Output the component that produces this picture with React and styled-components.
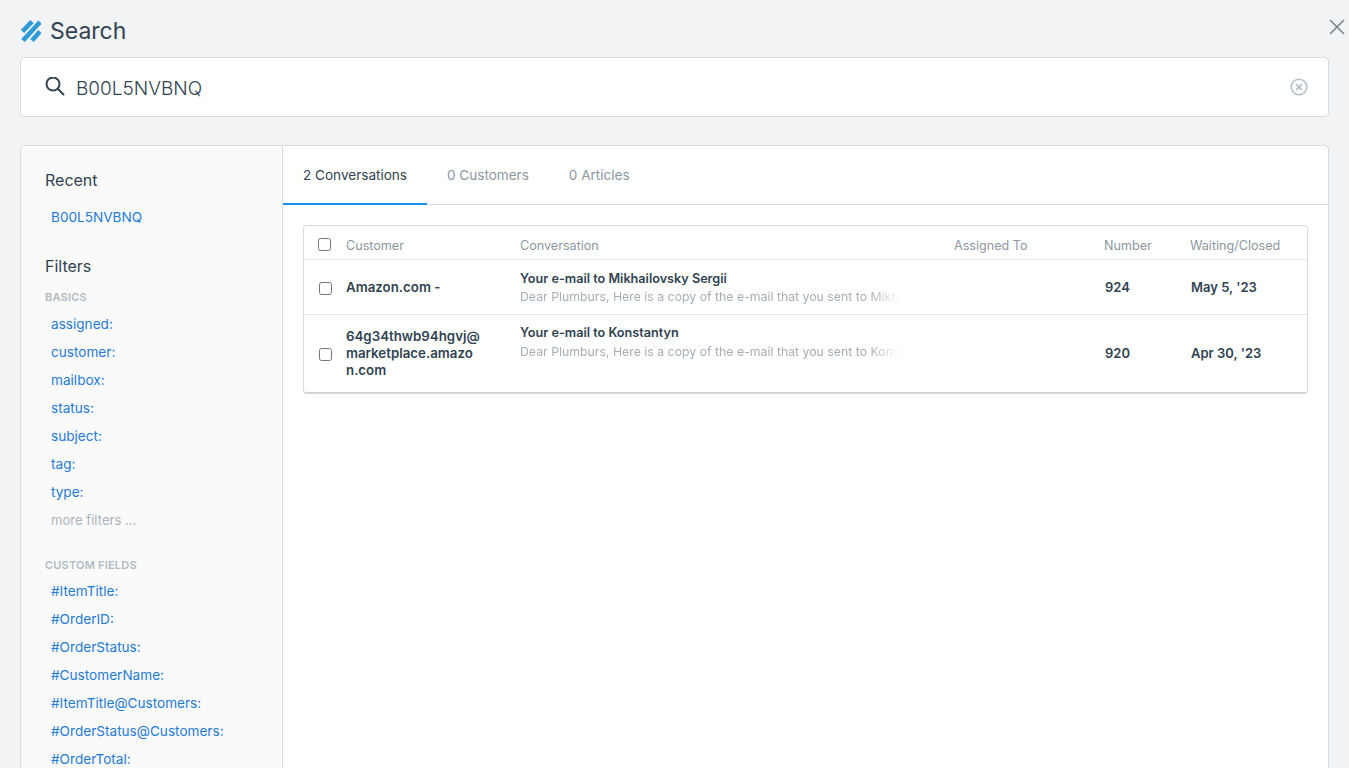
import React from "react";
import styled, { createGlobalStyle } from "styled-components";
import { X } from "lucide-react";

const Global = createGlobalStyle`
  html, body {
    margin: 0;
    height: 768px;
    overflow: hidden;
    background: #f1f3f5;
    font-family: "Inter", "Noto Sans", sans-serif;
    color: #314351;
  }
  * { box-sizing: border-box; }
`;

const Page = styled.div`
  position: relative;
  height: 768px;
  padding: 0 20px;
  overflow: hidden;
`;

const Header = styled.div`
  display: flex;
  align-items: center;
  gap: 9px;
  height: 57px;
  padding: 4px 0 0 1px;
`;

const Title = styled.h1`
  margin: 0;
  font-size: 23px;
  font-weight: 400;
  line-height: 30px;
  color: #314351;
`;

const CloseBtn = styled.div`
  position: absolute;
  top: 14px;
  right: -1px;
  width: 26px;
  height: 26px;
  color: #77858f;
`;

const SearchBox = styled.div`
  display: flex;
  align-items: center;
  height: 60px;
  padding: 0 20px 0 24px;
  background: #fff;
  border: 1px solid #d5dce1;
  border-radius: 4px;
`;

const SearchText = styled.div`
  flex: 1;
  margin: 2px 0 0 11px;
  font-size: 19px;
  font-weight: 300;
  color: #314351;
`;

const Panel = styled.div`
  display: flex;
  height: 700px;
  margin-top: 28px;
  background: #fff;
  border: 1px solid #d5dce1;
  border-radius: 4px;
`;

const Sidebar = styled.aside`
  flex: none;
  width: 262px;
  padding: 24px 24px 0;
  background: #fafafb;
  border-right: 1px solid #d5dce1;
  border-radius: 4px 0 0 0;
`;

const SideHead = styled.h3`
  margin: ${(p) => p.$top || 0}px 0 0;
  font-size: 16px;
  font-weight: 400;
  line-height: 20px;
  color: #314351;
`;

const GroupLabel = styled.div`
  margin-top: ${(p) => p.$top}px;
  font-size: 11px;
  font-weight: 600;
  line-height: 14px;
  letter-spacing: 0.2px;
  color: #b1bac2;
`;

const LinkList = styled.ul`
  list-style: none;
  margin: ${(p) => p.$top}px 0 0;
  padding: 0;
`;

const LinkItem = styled.li`
  height: 28px;
  padding-left: 6px;
  font-size: ${(p) => (p.$muted ? 13.1 : 13.6)}px;
  line-height: 28px;
  color: ${(p) => (p.$muted ? "#aab4bc" : "#1f7bd6")};
`;

const Main = styled.main`
  flex: 1;
  min-width: 0;
`;

const Tabs = styled.div`
  display: flex;
  height: 59px;
  border-bottom: 1px solid #d5dce1;
`;

const Tab = styled.div`
  height: 59px;
  padding: 0 20px;
  font-size: 13.55px;
  line-height: 58px;
  color: ${(p) => (p.$active ? "#314351" : "#8c979f")};
  border-bottom: 2px solid ${(p) => (p.$active ? "#1e90f0" : "transparent")};
`;

const Content = styled.div`
  padding: 20px 20px 0;
`;

const Table = styled.div`
  border: 1px solid #d5dce1;
  border-bottom: 2px solid #d0d7dc;
  border-radius: 4px;
`;

const Row = styled.div`
  display: grid;
  grid-template-columns: 42px 174px 434px 150px 86px 1fr;
  align-items: center;
  height: ${(p) => p.$height}px;
  padding-top: ${(p) => p.$pad || 0}px;
  border-top: ${(p) => (p.$first ? "none" : "1px solid #e4e8eb")};
`;

const HeadCell = styled.div`
  padding-top: 2px;
  font-size: 12.6px;
  color: #8c979f;
`;

const CheckCell = styled.div`
  display: flex;
  padding: ${(p) => p.$nudge || 0}px 0 0 ${(p) => p.$left}px;
`;

const Check = styled.input.attrs({ type: "checkbox" })`
  width: 13px;
  height: 13px;
  margin: 0;
`;

const Customer = styled.div`
  width: 134.5px;
  font-size: 13.3px;
  font-weight: 600;
  line-height: 17px;
  overflow-wrap: anywhere;
  color: #314351;
`;

const Conversation = styled.div`
  align-self: start;
  padding-top: ${(p) => p.$top}px;
  min-width: 0;
`;

const Subject = styled.div`
  font-size: 12.65px;
  font-weight: 600;
  line-height: 18px;
  color: #314351;
`;

const Snippet = styled.div`
  width: 380px;
  margin-top: ${(p) => p.$gap}px;
  font-size: 12.3px;
  line-height: 18px;
  white-space: nowrap;
  overflow: hidden;
  color: #a5afb7;
  mask-image: linear-gradient(to right, #000 350px, transparent 380px);
`;

const Strong = styled.div`
  padding: 0 0 ${(p) => p.$lift || 0}px 1px;
  font-size: 13px;
  font-weight: 600;
  color: #314351;
`;

const recent = ["B00L5NVBNQ"];
const basics = ["assigned:", "customer:", "mailbox:", "status:", "subject:", "tag:", "type:"];
const custom = [
  "#ItemTitle:",
  "#OrderID:",
  "#OrderStatus:",
  "#CustomerName:",
  "#ItemTitle@Customers:",
  "#OrderStatus@Customers:",
  "#OrderTotal:",
];

const rows = [
  {
    customer: "Amazon.com -",
    subject: "Your e-mail to Mikhailovsky Sergii",
    snippet: "Dear Plumburs, Here is a copy of the e-mail that you sent to Mikhailovsky Sergii",
    number: "924",
    date: "May 5, '23",
    height: 55,
    top: 10,
    gap: 0,
    lift: 0,
  },
  {
    customer: "64g34thwb94hgvj@marketplace.amazon.com",
    subject: "Your e-mail to Konstantyn",
    snippet: "Dear Plumburs, Here is a copy of the e-mail that you sent to Konstantyn",
    number: "920",
    date: "Apr 30, '23",
    height: 78,
    top: 9,
    gap: 1,
    lift: 2,
  },
];

function Logo() {
  return (
    <svg width="20" height="22" viewBox="0 0 20 22" fill="none" stroke="#2f9ad8" strokeWidth="4.6">
      <path d="M1.5 11.5 11 1.5" />
      <path d="M2 20.5 19 2" />
      <path d="M11 20.5 19 11.5" />
    </svg>
  );
}

function SearchIcon() {
  return (
    <svg width="20" height="20" viewBox="0 0 20 20" fill="none" stroke="#314351" strokeWidth="2" strokeLinecap="round">
      <circle cx="8" cy="7" r="6.5" />
      <path d="m13 12 5.5 5.5" />
    </svg>
  );
}

function ClearIcon() {
  return (
    <svg width="18" height="18" viewBox="0 0 18 18" fill="none" stroke="#b4c0ca" strokeLinecap="round">
      <circle cx="9" cy="9" r="7.8" strokeWidth="1.6" />
      <path d="m6.6 6.6 4.8 4.8m0-4.8-4.8 4.8" strokeWidth="1.8" />
    </svg>
  );
}

export default function App() {
  return (
    <Page>
      <Global />
      <Header>
        <Logo />
        <Title>Search</Title>
      </Header>
      <CloseBtn>
        <X size={26} strokeWidth={1.4} />
      </CloseBtn>
      <SearchBox>
        <SearchIcon />
        <SearchText>B00L5NVBNQ</SearchText>
        <ClearIcon />
      </SearchBox>
      <Panel>
        <Sidebar>
          <SideHead>Recent</SideHead>
          <LinkList $top={13}>
            {recent.map((r) => (
              <LinkItem key={r}>{r}</LinkItem>
            ))}
          </LinkList>
          <SideHead $top={25}>Filters</SideHead>
          <GroupLabel $top={14}>BASICS</GroupLabel>
          <LinkList $top={6}>
            {basics.map((b) => (
              <LinkItem key={b}>{b}</LinkItem>
            ))}
            <LinkItem $muted>more filters ...</LinkItem>
          </LinkList>
          <GroupLabel $top={24}>CUSTOM FIELDS</GroupLabel>
          <LinkList $top={5}>
            {custom.map((c) => (
              <LinkItem key={c}>{c}</LinkItem>
            ))}
          </LinkList>
        </Sidebar>
        <Main>
          <Tabs>
            <Tab $active>2 Conversations</Tab>
            <Tab>0 Customers</Tab>
            <Tab>0 Articles</Tab>
          </Tabs>
          <Content>
            <Table>
              <Row $first $height={33} $pad={4}>
                <CheckCell $left={14}>
                  <Check />
                </CheckCell>
                <HeadCell>Customer</HeadCell>
                <HeadCell>Conversation</HeadCell>
                <HeadCell>Assigned To</HeadCell>
                <HeadCell>Number</HeadCell>
                <HeadCell>Waiting/Closed</HeadCell>
              </Row>
              {rows.map((r) => (
                <Row key={r.number} $height={r.height}>
                  <CheckCell $left={15} $nudge={2}>
                    <Check />
                  </CheckCell>
                  <Customer>{r.customer}</Customer>
                  <Conversation $top={r.top}>
                    <Subject>{r.subject}</Subject>
                    <Snippet $gap={r.gap}>{r.snippet}</Snippet>
                  </Conversation>
                  <div />
                  <Strong $lift={r.lift}>{r.number}</Strong>
                  <Strong $lift={r.lift}>{r.date}</Strong>
                </Row>
              ))}
            </Table>
          </Content>
        </Main>
      </Panel>
    </Page>
  );
}
